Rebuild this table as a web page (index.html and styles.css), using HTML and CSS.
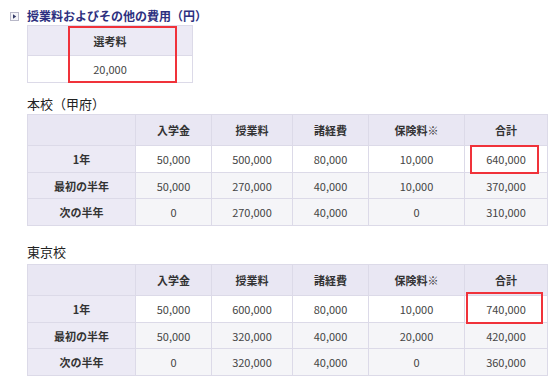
FILE: index.html
```html
<!DOCTYPE html>
<html lang="ja">
<head>
<meta charset="utf-8">
<link rel="stylesheet" href="styles.css">
</head>
<body>
<div class="page">
  <div class="title">
    <span class="title-icon"><svg width="9" height="9" viewBox="0 0 9 9"><rect x="0.5" y="0.5" width="8" height="8" fill="#f4f4f8" stroke="#b8b8c8"/><path d="M3 2.2 L6.2 4.5 L3 6.8 Z" fill="#333a66"/></svg></span>
    <span class="title-text">授業料およびその他の費用（円）</span>
  </div>
  <div class="content">
    <div class="wrap small-wrap">
      <table class="tbl small">
        <tr><th class="hd">選考料</th></tr>
        <tr><td>20,000</td></tr>
      </table>
      <div class="mark mark-small"></div>
    </div>

    <h2 class="h2 h2-first">本校（甲府）</h2>
    <div class="wrap">
      <table class="tbl main">
        <colgroup><col class="c0"><col class="c1"><col class="c2"><col class="c3"><col class="c4"><col class="c5"></colgroup>
        <tr class="head"><th></th><th>入学金</th><th>授業料</th><th>諸経費</th><th>保険料※</th><th>合計</th></tr>
        <tr class="r1"><th>1年</th><td>50,000</td><td>500,000</td><td>80,000</td><td>10,000</td><td>640,000</td></tr>
        <tr class="r2"><th>最初の半年</th><td>50,000</td><td>270,000</td><td>40,000</td><td>10,000</td><td>370,000</td></tr>
        <tr class="r3"><th>次の半年</th><td>0</td><td>270,000</td><td>40,000</td><td>0</td><td>310,000</td></tr>
      </table>
      <div class="mark mark-a"></div>
    </div>

    <h2 class="h2 h2-second">東京校</h2>
    <div class="wrap">
      <table class="tbl main">
        <colgroup><col class="c0"><col class="c1"><col class="c2"><col class="c3"><col class="c4"><col class="c5"></colgroup>
        <tr class="head"><th></th><th>入学金</th><th>授業料</th><th>諸経費</th><th>保険料※</th><th>合計</th></tr>
        <tr class="r1"><th>1年</th><td>50,000</td><td>600,000</td><td>80,000</td><td>10,000</td><td>740,000</td></tr>
        <tr class="r2"><th>最初の半年</th><td>50,000</td><td>320,000</td><td>40,000</td><td>20,000</td><td>420,000</td></tr>
        <tr class="r3"><th>次の半年</th><td>0</td><td>320,000</td><td>40,000</td><td>0</td><td>360,000</td></tr>
      </table>
      <div class="mark mark-b"></div>
    </div>
  </div>
</div>
</body>
</html>
```
FILE: styles.css
```css
html, body {
  margin: 0;
  padding: 0;
  background: #ffffff;
}
body {
  font-family: "Noto Sans CJK JP", "Noto Sans", sans-serif;
  color: #333333;
  font-size: 11px;
}
.page {
  width: 554px;
  height: 384px;
  overflow: hidden;
}
.title {
  display: flex;
  align-items: center;
  gap: 8px;
  padding-left: 10px;
  margin-top: 9px;
  height: 14px;
}
.title-icon {
  display: flex;
  width: 9px;
  height: 9px;
}
.title-text {
  font-size: 12px;
  font-weight: bold;
  color: #2d3080;
  line-height: 14px;
}
.content {
  padding-left: 27px;
}
.wrap {
  position: relative;
  width: max-content;
}
.small-wrap {
  margin-top: 2px;
}
.tbl {
  border-collapse: collapse;
  table-layout: fixed;
}
.tbl th, .tbl td {
  border: 1px solid #dcdae8;
  text-align: center;
  vertical-align: middle;
  padding: 0;
  font-size: 11px;
  line-height: 14px;
}
.tbl th {
  font-weight: bold;
  background: #eceaf5;
}
.tbl td {
  color: #444444;
}
.small {
  width: 166px;
}
.small th {
  height: 29px;
}
.small td {
  height: 26px;
  background: #ffffff;
}
.main {
  width: 520px;
}
.c0 { width: 108px; }
.c1 { width: 76px; }
.c2 { width: 81px; }
.c3 { width: 76px; }
.c4 { width: 96px; }
.c5 { width: 83px; }
.main .head th {
  height: 30px;
  background: #e9e7f3;
}
.main .r1 td { height: 26px; background: #ffffff; }
.main .r2 td { height: 25px; background: #f5f5f8; }
.main .r3 td { height: 26px; background: #f5f5f8; }
.h2 {
  margin: 0;
  font-size: 13px;
  font-weight: normal;
  color: #222222;
  line-height: 18px;
}
.h2-first {
  margin-top: 12px;
  margin-bottom: 1px;
}
.h2-second {
  margin-top: 17px;
  margin-bottom: 3px;
}
.mark {
  position: absolute;
  border: 2px solid #f0323a;
  box-sizing: border-box;
  pointer-events: none;
}
.mark-small {
  left: 41px;
  top: 1px;
  width: 109px;
  height: 57px;
}
.mark-a {
  left: 443px;
  top: 31px;
  width: 69px;
  height: 29px;
}
.mark-b {
  left: 439px;
  top: 28px;
  width: 77px;
  height: 32px;
}
```
